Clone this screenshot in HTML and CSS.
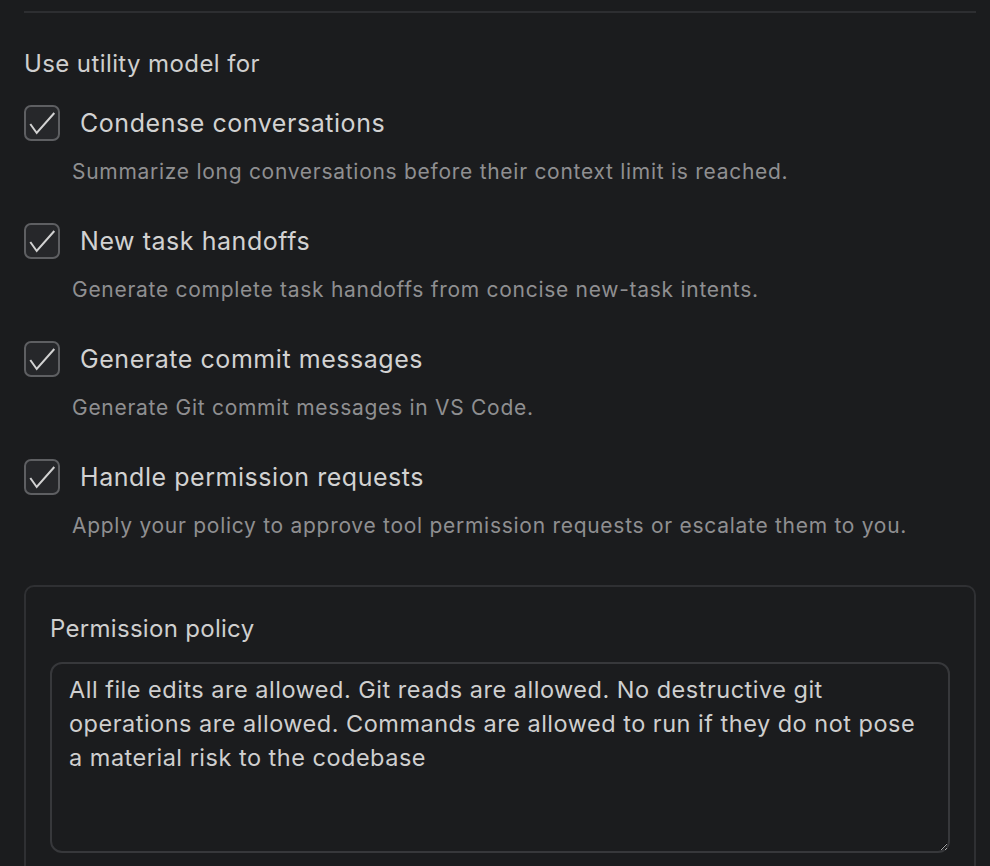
FILE: index.html
```html
<!doctype html>
<html>

<head>
  <meta charset="utf-8">
  <title>Utility model settings</title>
  <meta name="viewport" content="width=device-width, initial-scale=1">
  <link rel="stylesheet" href="styles.css">
</head>

<body>
  <hr class="divider">

  <h3 class="section_title">Use utility model for</h3>

  <div class="option">
    <label class="option_row">
      <span class="check"><svg viewBox="0 0 32 32"><path d="M4.3 17L10.7 26L28.3 6"/></svg></span>
      <span class="option_label">Condense conversations</span>
    </label>
    <p class="option_desc">Summarize long conversations before their context limit is reached.</p>
  </div>

  <div class="option">
    <label class="option_row">
      <span class="check"><svg viewBox="0 0 32 32"><path d="M4.3 17L10.7 26L28.3 6"/></svg></span>
      <span class="option_label">New task handoffs</span>
    </label>
    <p class="option_desc">Generate complete task handoffs from concise new-task intents.</p>
  </div>

  <div class="option">
    <label class="option_row">
      <span class="check"><svg viewBox="0 0 32 32"><path d="M4.3 17L10.7 26L28.3 6"/></svg></span>
      <span class="option_label">Generate commit messages</span>
    </label>
    <p class="option_desc">Generate Git commit messages in VS Code.</p>
  </div>

  <div class="option">
    <label class="option_row">
      <span class="check"><svg viewBox="0 0 32 32"><path d="M4.3 17L10.7 26L28.3 6"/></svg></span>
      <span class="option_label">Handle permission requests</span>
    </label>
    <p class="option_desc">Apply your policy to approve tool permission requests or escalate them to you.</p>
  </div>

  <div class="policy">
    <div class="policy_title">Permission policy</div>
    <textarea class="policy_text">All file edits are allowed. Git reads are allowed. No destructive git operations are allowed. Commands are allowed to run if they do not pose a material risk to the codebase</textarea>
  </div>
</body>

</html>
```

FILE: styles.css
```css
* {
  margin: 0;
  box-sizing: border-box;
}

html {
  background: #1b1c1e;
  font-family: Inter, "Noto Sans", sans-serif;
  color: #cfcfcf;
}

body {
  padding: 11px 14px 0 24px;
}

.divider {
  border: 0;
  height: 2px;
  background: #2d2e31;
}

.section_title {
  font-size: 24px;
  font-weight: 400;
  line-height: 29px;
  margin-top: 36px;
  letter-spacing: 0.4px;
}

.option {
  margin-top: 27px;
}

.option + .option {
  margin-top: 38px;
}

.option_row {
  display: flex;
  align-items: center;
  gap: 20px;
}

.check {
  flex: none;
  width: 36px;
  height: 36px;
  border: 2px solid #5e5f62;
  border-radius: 7px;
  background: #26272a;
}

.check svg {
  display: block;
  width: 32px;
  height: 32px;
  fill: none;
  stroke: #d2d2d2;
  stroke-width: 2;
}

.option_label {
  font-size: 25px;
  line-height: 30px;
  letter-spacing: 0.55px;
  color: #d2d2d2;
}

.option_desc {
  margin-top: 18px;
  padding-left: 48px;
  font-size: 21px;
  line-height: 26px;
  letter-spacing: 0.72px;
  color: #8f8f91;
}

.policy {
  margin-top: 46px;
  border: 2px solid #2f3033;
  border-radius: 10px;
  padding: 27px 24px 0 24px;
  height: 320px;
}

.policy_title {
  font-size: 24px;
  line-height: 29px;
  letter-spacing: 0.3px;
  color: #cfcfcf;
}

.policy_text {
  display: block;
  margin-top: 19px;
  width: 100%;
  height: 191px;
  background: #1b1c1e;
  border: 2px solid #37383b;
  border-radius: 12px;
  padding: 9px 17px;
  font-family: Inter, "Noto Sans", sans-serif;
  font-size: 23.5px;
  line-height: 34px;
  letter-spacing: 0.5px;
  color: #cfcfcf;
  resize: vertical;
}
```
